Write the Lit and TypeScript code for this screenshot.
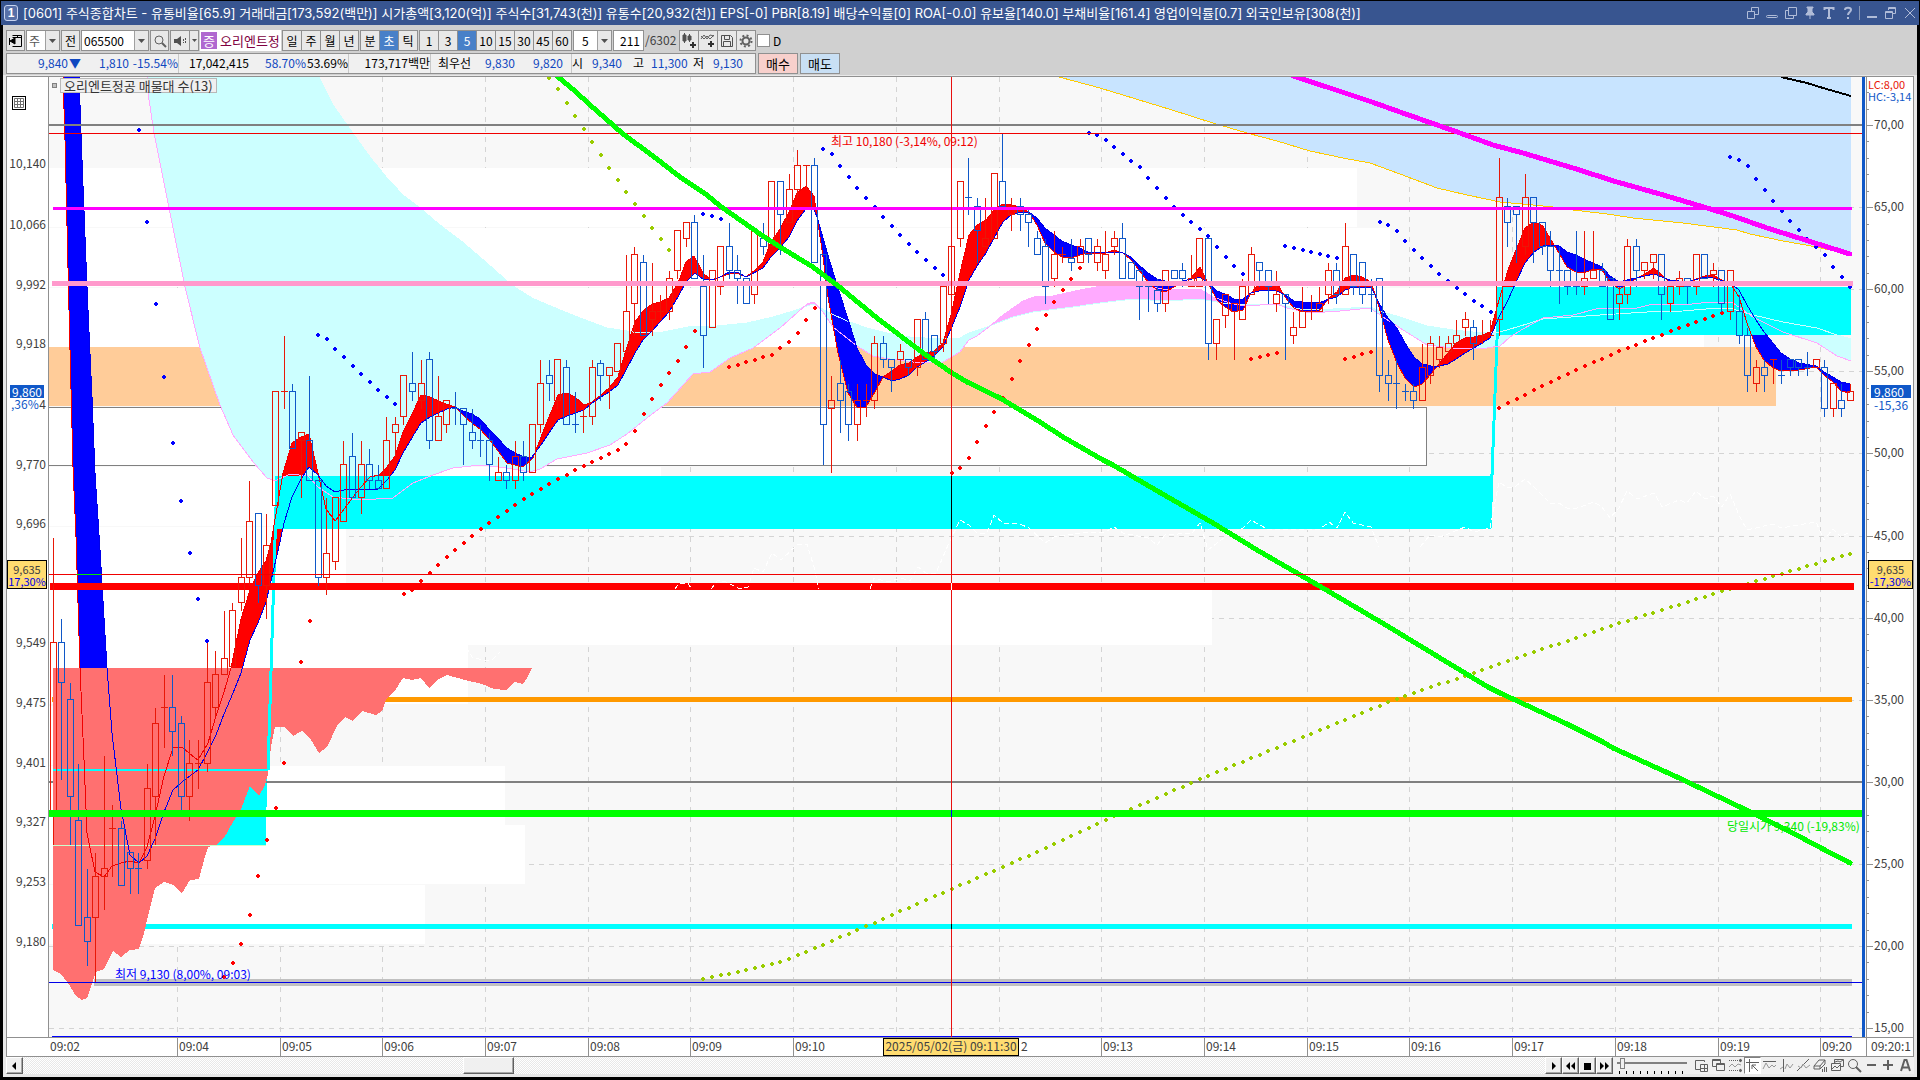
import { LitElement, html, svg, css } from "lit";
import { customElement, state } from "lit/decorators.js";

type Pt = [number, number];

/* Plot canvas: one unit is one pixel on a 1920-wide window. */
const LEFT = 49;
const TOP = 77;
const WIDTH = 1817;
const HEIGHT = 960;
const RED = "#e81808";
const BLUE = "#1058c8";

const barX = (i: number) => 53 + 8.5585 * i;
const tickY = (n: number) => 133.3 + n * 8.083;
const pctX = (x: number) => `${(((x - LEFT) / WIDTH) * 100).toFixed(3)}%`;
const pctY = (y: number) => `${(((y - TOP) / HEIGHT) * 100).toFixed(3)}%`;

/* Candles: direction, high, body top, body bottom, low; prices in 10-won ticks below 10,180. */
const CANDLES = `
r50,63,84,88 b60,63,68,80 b68,70,82,88 b78,85,98,98 b91,97,100,103 r89,92,97,105 r77,91,92,96 r83,86,86,92
b85,86,93,93 b89,89,91,94 b89,91,91,94 r78,81,90,91 r71,73,82,88 r67,71,71,76 b67,71,74,77 b72,73,82,84
r75,78,82,85 r75,78,78,81 r63,68,78,79 r64,67,71,72 r59,65,67,67 r58,59,66,66 r50,55,58,59 r43,48,55,56
b47,47,56,58 r47,51,56,60 r32,32,46,46 r25,32,32,34 b31,32,39,39 r37,37,38,45 b30,38,43,43 b43,43,55,56
r45,52,55,57 r45,45,53,54 r38,41,48,48 b37,40,45,45 r38,41,45,47 b39,41,43,44 b41,43,44,44 r35,38,44,44
r35,36,37,40 r30,30,35,36 b27,31,32,33 r28,31,33,34 b27,28,38,39 r30,35,38,38 r33,33,36,37 b32,34,34,36
b34,34,36,41 b34,37,38,39 b36,38,38,40 b37,38,41,43 r40,42,43,43 b41,42,43,44 r38,40,43,44 b38,40,42,43
r36,36,42,42 r28,31,36,37 b28,30,31,33 r28,28,33,34 b28,29,36,36 b32,36,36,37 r34,35,35,37 r28,29,35,36
b28,28.5,30,33 r29,29,30,34 r26,26,29.5,29.5 r15,22,27,27 r14,15,21,25 b15,16,25,25 r16,22,23,25 r20,22,22,23
r17,18,22,23 r12,12,17,18 r11,11,13,14 b10,11,18,18 b15,19,25,29 r17,17,24,24 r14,14,19,20 b11,14,17,18
b15,17,18,21 b18,18,21,21 r12,12,20,21 b11,13,14,15 r6,6,14,14 b6,6,10,15 r5,7,11,11 r2,4,7,8
r4,4,4,7 b3,4,16,16 b15,15,36,41 r30,33,34,42 b28,31,33,37 b31,32,36,38 r31,33,36,38 r31,33,33,35
r25,26,33,34 b25,26,28,29 b28,28,29,32 r26,27,28,29 b28,28,29,30 r23,23,29,30 b22,23,28,28 b25,25,27,28
r19,19,26,27 r14,14,20,20 r6,6,13,14 b3,8,8,10 b8,9,12,16 r8,13,14,14 r5,5,13,13 b0,6,9,9
r8,9,10,12 b8,9,10,12 b9,10,11,14 b12,13,15,15 b13,14,19,21 r12,15,18,19 r14,15,15,16 b13,15.5,16,17
r13,14,16,16 b13,13,15,16 r13,14,16,17 r12,15,17,18 r12,13,14,15 b11,13,18,18 b16,16,18,18 b17,17,19,23
b19,19,19,22 b18,19.5,21,22 r17,17,21,22 b17,17,18,18 b16,17,18,19 r15,18,19,19 r13,13,19,19 b13,13,26,28
r23,23,26,28 r20,20,22.5,24 r21,21,22,28 r18,19,23,23 r14,15,20,20 b16,16,17,19 b17,17,19,21 r17,20,21,22
b20,20,21,28 r22,24,25,26 r19,22,24,24 r20,22,22,23 r19,21,22,22 r16,17,20,21 b16,17,20,21 r11,14,20,20
b15,15,19,20 b16,16,20,21 b18,20,20,22 b18,18,30,32 b28,30,31,33 b28,31,31,34 b31,32,32,33 b31,32,33,34
r26,29,33,33 r25,26,30,31 r25,26.5,28,29 r25,26,27,28 r23,25,26,26 r22,23,24,25 b23,24,26,28 r23,25,25,26
r23,25,25,25 r3,8,23,25 b8,9,11,14 b9,9,10,16 r5,8,14,15 b8,8,11,16 b11,11,14,15 b12,14,17,19
b14,17,17,21 b17,17,19,20 b12,19,19,20 r12,18,19,20 r12,17,18,18 b16,17,19,19 b18,18,23,23 r19,20,21,23
r13,14,20,21 b13,14,17,19 r16,16,17,18 r15,15,16,18 b15,15,20,23 r19,19,21,22 r17,18,19,20 b18,18,19,21
r15,15,19,20 b15,15,18,18 r16,17,17.5,19 b17,17,21,22 r17,17,22,23 b20,22,25,26 b24,25,30,32 r28,29,31,32
b28,29,30,32 r28,28,28,31 b28,30,30,31 b28,28,29,30 b28,28,29,30 b27,29,29,30 r28,28,29,29 b28,29,34,35
r31,31,34,35 b31,33,34,35 r31,32,33,33`
  .trim()
  .split(/\s+/)
  .map((c) => ({ up: c[0] === "r", v: c.slice(1).split(",").map(Number) }));

const parse = (s: string): Pt[] =>
  s.trim().split(/\s+/).map((p) => p.split(",").map(Number) as Pt);

const FAST = parse(`63,77 65,140 69,310 73,467 76,537 80,668 84,760 87,833 95,872 104,877 112,866 121,863 130,861 139,863
147,847 155,816 164,776 173,748 182,747 190,754 198,760 208,743 216,716 224,692 231,668 241,619 250,590 258,573 266,561
271,543 272,537 283,473 292,443 301,437 309,434 318,473 326,509 335,521 345,508 353,497 361,487 370,477 379,475 387,467
395,456 403,432 413,412 421,395 430,397 443,403 455,407 463,415 473,424 480,429 490,440 507,463 523,467 533,458 541,437
549,417 558,395 567,393 575,397 584,405 592,402 601,395 609,388 618,377 626,350 635,322 643,311 652,304 660,302 669,298
678,283 686,262 694,256 703,273 711,280 720,277 729,274 737,273 746,277 754,271 763,262 771,242 780,229 789,212 797,193
806,186 814,196 818,223 823,257 828,297 838,353 848,393 857,407 866,407 875,392 883,377 892,371 900,365 909,363 917,357
927,353 934,351 943,343 951,315 960,273 969,235 977,225 986,220 994,210 1003,204 1011,205 1020,207 1029,212 1037,225
1045,243 1054,252 1062,257 1071,258 1080,255 1088,253 1105,253 1114,250 1123,253 1131,260 1139,270 1148,282 1157,290
1165,292 1174,287 1183,282 1191,278 1200,267 1208,283 1217,300 1225,307 1234,312 1243,310 1251,293 1259,284 1268,282
1277,283 1285,297 1294,308 1303,312 1319,311 1329,298 1337,292 1345,278 1353,275 1362,277 1371,282 1379,307 1388,340
1397,363 1405,378 1414,387 1422,384 1431,374 1439,364 1448,353 1456,343 1465,338 1474,337 1482,335 1490,332 1499,300
1508,270 1516,250 1525,228 1534,222 1543,226 1551,240 1559,253 1567,267 1576,272 1586,272 1594,269 1602,270 1610,282
1619,289 1627,285 1637,278 1645,274 1654,268 1662,275 1670,283 1679,286 1687,286 1696,279 1705,276 1713,275 1722,280
1730,283 1739,297 1747,323 1756,347 1764,360 1773,368 1781,371 1799,370 1816,367 1824,375 1833,382 1841,391 1850,393`);

const SLOW = parse(`63,77 79,77 82,160 87,287 92,397 95,473 100,550 107,668 112,733 121,809 130,855 139,863 147,856 155,839
164,812 173,790 182,782 198,770 207,753 216,735 224,714 233,693 241,673 250,640 258,623 266,602 274,568 280,542 284,523
292,497 301,479 309,467 318,475 326,486 335,492 348,489 378,489 387,480 395,470 403,453 413,436 421,423 430,417 438,413
447,409 455,407 463,411 472,414 480,419 490,430 507,448 515,453 524,457 532,457 541,445 549,433 558,420 567,416 584,410
592,403 601,397 609,392 618,385 626,370 635,353 643,340 652,331 669,312 678,297 686,282 695,273 703,279 712,280 720,277
729,272 737,272 746,277 763,268 771,257 780,248 789,237 797,221 806,209 814,209 818,220 827,252 837,285 849,322 857,348
866,365 875,374 883,377 892,381 900,379 909,375 917,367 927,361 934,356 943,347 951,329 960,307 969,280 977,266 986,253
994,238 1003,222 1011,215 1020,212 1029,212 1037,218 1045,228 1054,235 1062,241 1071,245 1080,248 1088,252 1105,253
1114,252 1123,253 1131,257 1139,265 1148,273 1157,279 1165,281 1183,281 1200,277 1208,283 1217,291 1225,294 1234,299
1243,299 1251,293 1259,291 1268,290 1277,291 1285,295 1294,301 1303,302 1319,303 1329,299 1337,297 1345,290 1353,287
1371,287 1379,303 1388,318 1397,328 1405,343 1414,357 1422,364 1431,366 1439,366 1448,364 1456,359 1465,353 1474,348
1490,338 1499,317 1508,300 1516,282 1525,263 1534,252 1543,246 1551,245 1559,246 1567,252 1576,255 1586,260 1602,267
1610,276 1619,282 1627,280 1645,276 1654,274 1670,280 1687,282 1705,277 1713,278 1730,283 1739,290 1747,305 1756,320
1764,332 1773,343 1781,353 1790,359 1799,363 1816,366 1824,372 1833,377 1841,382 1850,384`);

const SPAN_A = parse(`147,77 319,77 333,105 347,125 370,157 387,178 403,195 420,208 440,225 460,240 480,257 497,272 513,286
532,298 553,307 580,318 607,328 633,332 663,332 693,326 707,327 747,323 773,317 793,311 813,304 830,313 847,321 867,328
887,333 910,337 940,339 960,338 969,333 987,327 1013,317 1033,312 1073,307 1100,303 1133,299 1167,301 1200,299 1223,303
1250,305 1277,304 1300,309 1333,309 1370,307 1383,312 1400,317 1427,326 1453,330 1483,333 1500,332 1517,327 1543,319
1600,315 1647,312 1683,311 1717,308 1733,309 1753,315 1783,322 1817,328 1837,335 1851,339`);

const SPAN_B = parse(`147,77 148,93 154,133 170,213 185,287 200,348 220,405 233,435 253,462 267,478 275,481 290,474 308,476
318,487 333,497 360,500 393,498 413,483 433,475 453,468 480,465 507,468 530,472 540,469 557,459 587,453 610,445 627,434
647,418 667,403 693,374 710,372 730,358 753,348 780,328 807,304 814,302 823,312 833,327 857,346 873,356 890,359 913,362
943,362 960,352 969,340 977,336 990,326 1003,315 1023,301 1037,296 1053,296 1080,290 1107,285 1130,283 1147,286
1167,290 1200,289 1213,297 1230,303 1243,306 1277,304 1287,308 1310,313 1340,311 1370,308 1383,317 1400,328 1427,345
1453,348 1480,349 1500,346 1510,337 1523,329 1543,318 1573,315 1600,308 1633,309 1653,304 1683,305 1710,302 1733,303
1753,317 1783,332 1817,343 1837,356 1851,361`);

const LONG_SPAN =
  "1059,77 1100,88 1172,110 1213,123 1247,133 1277,141 1310,151 1343,158 1370,163 1400,174 1437,188 1467,195 1500,202 1533,205 1553,207 1573,210 1607,214 1633,218 1683,223 1737,230 1750,234 1783,241 1817,247 1851,255";
const MAGENTA_MA =
  "1293,76 1330,88 1372,102 1400,112 1460,133 1493,145 1523,153 1573,168 1617,182 1660,194 1707,208 1733,216 1767,228 1850,254";
const BLACK_MA = "1781,77 1807,83 1823,88 1851,96";
const GREEN_MA =
  "557,76 575,91 590,105 613,125 623,134 653,156 680,177 707,195 720,206 763,236 780,247 813,267 837,285 877,318 923,353 952,373 967,382 1000,398 1040,422 1063,437 1103,460 1113,465 1147,485 1213,523 1257,550 1328,591 1384,624 1488,687 1500,693 1567,724 1603,742 1613,748 1677,777 1740,807 1787,830 1823,849 1850,863";
const RED_CLOUD =
  "53,668 532,668 527,678 523,684 515,682 506,690 494,689 482,684 465,680 447,675 437,680 429,688 421,678 412,680 403,678 396,689 386,700 382,711 376,715 362,711 353,721 345,717 337,726 327,747 319,753 310,738 302,731 293,736 285,727 275,727 271,747 268,774 265,785 259,796 250,786 241,809 233,822 224,838 216,845 208,847 204,860 199,879 190,880 182,893 173,885 164,882 155,888 149,912 144,933 139,949 130,950 121,957 113,951 104,969 96,972 87,998 82,1000 76,996 70,986 61,974 53,970";

const CLOSE_LINES = [
  "438,654 446,653 456,652 465,645 472,657 482,660 492,660 500,652",
  "675,589 679,583 688,583 692,590",
  "711,589 718,580 726,582 740,589 748,587 754,568 763,572 772,553 781,560 798,544 807,544 814,567 819,589",
  "870,589 874,578 888,582 901,578 910,581 918,567 926,573 936,573 949,543 960,520 969,525 977,533 987,533 994,515 1003,523 1020,524 1029,528 1045,543 1054,537 1080,533 1105,532 1114,527 1123,533 1148,538 1157,545 1165,535 1192,533 1200,523 1208,550 1225,537 1243,528 1251,520 1267,529 1320,529 1329,522 1337,528 1345,512 1353,523 1371,527 1379,547",
  "1420,547 1430,535 1440,537 1453,532 1465,527 1474,532 1490,528 1499,482 1508,488 1516,486 1525,479 1534,487 1550,503 1559,503 1567,508 1577,508 1594,502 1602,507 1610,518 1619,508 1627,491 1637,499 1654,493 1662,507 1679,500 1687,503 1696,491 1705,499 1713,496 1722,507 1730,494 1739,515 1747,530 1773,524 1781,528 1816,522 1824,540 1833,529 1841,537 1851,531",
];

/* Dotted series: first bar index and one y per bar. */
const SAR_BLUE: [number, number[]][] = [
  [10, [130, 222, 304, 377, 443, 501, 553, 599, 641]],
  [31, [335, 339, 349, 357, 366, 374, 382, 390, 397, 404]],
  [76, [214, 216, 219]],
  [90, [149, 154, 166, 177, 188, 198, 207, 217, 226, 235, 244, 252, 260, 268, 275]],
  [121, [133, 135, 140, 147, 154, 161, 167, 178, 188, 198, 207, 215, 222, 229, 236, 247, 257, 266, 274]],
  [144, [246, 248, 250, 252, 254, 256, 258]],
  [155, [222, 225, 231, 241, 250, 258, 266, 274, 281, 288, 294, 301, 306, 312]],
  [196, [157, 160, 166, 179, 190, 201, 211, 221, 230, 239, 247, 255, 267, 277, 287]],
];
const SAR_RED: [number, number[]][] = [
  [20, [977, 963, 944, 915, 876, 840, 808, 763]],
  [29, [662, 621]],
  [41, [594, 590, 581, 573, 565, 557, 550, 543, 536, 529, 523, 517, 511, 505, 499, 494, 489, 484, 479, 475, 470, 466,
    462, 458, 454, 450, 444, 431, 414, 399, 385, 373, 361, 347, 331]],
  [79, [367, 365, 362, 360, 357, 355, 348, 342, 333, 320, 308]],
  [105, [473, 468, 458, 442, 426, 412, 398, 379, 361, 345, 329, 315, 302, 290, 279, 268]],
  [140, [359, 357, 355, 353]],
  [151, [359, 357, 354, 352]],
  [169, [408, 403, 399, 395, 390, 386, 382, 378, 374, 370, 366, 362, 359, 355, 351, 348, 345, 341, 338, 335, 331, 328,
    325, 322, 319, 316, 313]],
];
const OLIVE_TOP: [number, number[]][] = [
  [58, [78, 89, 103, 116, 129, 142, 155, 168, 180, 192, 204, 216, 228, 239, 250]],
];
const OLIVE_RISE: Pt[] = [[76, 979], [77, 977], [80, 972], [85, 962], [86, 959], [94, 930], [105, 889], [115, 852],
  [123, 820], [136, 772], [157, 699], [169, 664], [182, 626], [194, 594], [203, 571], [210, 554]];

/* Volume profile rows: top y, right end. */
const PROFILE: Pt[] = [[168, 1357], [228, 1390], [288, 1704], [467, 661], [527, 346], [586, 1212], [645, 468],
  [706, 220], [766, 505], [825, 525], [885, 425]];

const MINUTES: [string, number][] = [["09:02", 49], ["09:04", 177], ["09:05", 280], ["09:06", 382], ["09:07", 485],
  ["09:08", 588], ["09:09", 690], ["09:10", 793], ["", 896], ["", 999], ["09:13", 1101], ["09:14", 1204],
  ["09:15", 1307], ["09:16", 1409], ["09:17", 1512], ["09:18", 1615], ["09:19", 1718], ["09:20", 1820]];

const PRICES: [string, number][] = [["10,140", 164], ["10,066", 225], ["9,992", 285], ["9,918", 344], ["4", 405],
  ["9,770", 465], ["9,696", 524], ["9,549", 643], ["9,475", 703], ["9,401", 763], ["9,327", 822], ["9,253", 882],
  ["9,180", 942]];

const RATES: [string, number][] = ["70", "65", "60", "55", "50", "45", "40", "35", "30", "25", "20", "15"].map(
  (r, i) => [`${r},00`, Math.round(125 + i * 82.1)]
);

const lerp = (pts: Pt[], x: number) => {
  for (let i = 1; i < pts.length; i++) {
    if (x <= pts[i][0]) {
      const [x0, y0] = pts[i - 1];
      const [x1, y1] = pts[i];
      return y0 + ((y1 - y0) * (x - x0)) / (x1 - x0);
    }
  }
  return pts[pts.length - 1][1];
};

/* Fills the space between two lines, split by which of them is on top. */
const ribbon = (a: Pt[], b: Pt[]) => {
  let over = "";
  let under = "";
  const end = Math.min(a[a.length - 1][0], b[b.length - 1][0]);
  for (let x = a[0][0]; x < end; x++) {
    const ya = Math.round(lerp(a, x + 0.5));
    const yb = Math.round(lerp(b, x + 0.5));
    if (ya === yb) continue;
    const cell = `M${x} ${ya}V${yb}h1V${ya}z`;
    if (ya < yb) over += cell;
    else under += cell;
  }
  return { over, under };
};

const join = (pts: Pt[]) => pts.map((p) => p.join(",")).join(" ");
const dotPath = (series: [number, number[]][]) =>
  series
    .map(([i0, ys]) =>
      ys.map((y, k) => `M${Math.round(barX(i0 + k)) - 2} ${y - 1}h1v-1h2v1h1v2h-1v1h-2v-1h-1z`).join("")
    )
    .join("");

const MA_FILL = ribbon(FAST, SLOW);
const SPAN_FILL = ribbon(SPAN_A, SPAN_B);
const OLIVE = dotPath([
  ...OLIVE_TOP,
  [76, Array.from({ length: 135 }, (_, k) => Math.round(lerp(OLIVE_RISE, 76 + k)))],
]);

const candlePath = (up: boolean) =>
  CANDLES.map((c, i) => {
    if (c.up !== up) return "";
    const x = Math.round(barX(i) - 0.5) + 0.5;
    const [h, t, b, l] = c.v.map((n) => Math.floor(tickY(n)) + 0.5);
    const body = t === b ? `M${x - 3.5} ${t}h7` : `M${x - 3} ${t}h6V${b}h-6z`;
    return `${h < t ? `M${x} ${h}V${t}` : ""}${body}${l > b ? `M${x} ${b}V${l}` : ""}`;
  }).join("");
const UP_PATH = candlePath(true);
const DOWN_PATH = candlePath(false);

const hline = (y: number, x1: number, x2: number, color: string, w: number) =>
  svg`<rect x=${x1} y=${y} width=${x2 - x1} height=${w} fill=${color}></rect>`;

@customElement("chart-plot")
class ChartPlot extends LitElement {
  static styles = css`
    :host {
      display: block;
      position: relative;
      overflow: hidden;
      min-width: 0;
      min-height: 0;
      background: #f8f8f8;
    }
    svg {
      position: absolute;
      inset: 0;
      width: 100%;
      height: 100%;
      display: block;
    }
    .note {
      position: absolute;
      white-space: nowrap;
      line-height: 14px;
      font-size: 12px;
    }
    .high {
      color: #f00000;
    }
    .low {
      color: #0000ff;
    }
    .open {
      color: #00e800;
    }
    .legend {
      position: absolute;
      left: 3px;
      top: 1px;
      display: flex;
      align-items: center;
      gap: 3px;
    }
    .mark {
      width: 3px;
      height: 3px;
      border: 1px solid #808080;
      background: #c0c0c0;
    }
    .name {
      border: 1px solid #b8b8b8;
      background: #f0f0f0;
      color: #333;
      padding: 0 3px;
      font-size: 13px;
      line-height: 13px;
      white-space: nowrap;
    }
  `;

  render() {
    return html`
      <svg viewBox="49 77 1817 960" preserveAspectRatio="none" shape-rendering="crispEdges" fill="none"
        role="img" aria-label="오리엔트정공 5초 차트">
        <g stroke="#d4d4d4" stroke-dasharray="5 5">
          ${MINUTES.slice(1).map(([, x]) => svg`<path d="M${x + 0.5} 77V1037"></path>`)}
          ${RATES.map(([, y]) => svg`<path d="M49 ${y + 0.5}H1862"></path>`)}
        </g>
        ${PROFILE.map(([y, x]) => svg`<rect x="49" y=${y} width=${x - 49} height="59" fill="#fff"></rect>`)}
        <rect x="49" y="347" width="1727" height="59" fill="#ffcc99"></rect>
        <rect x="40.5" y="407.5" width="1386" height="58" fill="#fff" stroke="#808080"></rect>
        <polygon points="${LONG_SPAN} 1851,77" fill="#c8e4ff"></polygon>
        <polyline points=${LONG_SPAN} stroke="#ffcc00"></polyline>
        <path d=${SPAN_FILL.over} fill="#ccffff"></path>
        <path d=${SPAN_FILL.under} fill="#ffaaff"></path>
        <path d=${MA_FILL.over} fill="#ff0000"></path>
        <path d=${MA_FILL.under} fill="#0000ff"></path>
        <g fill="#00ffff">
          <rect x="275" y="476" width="1215" height="53"></rect>
          <rect x="1499" y="287" width="352" height="48"></rect>
          <polygon points="217,845 217,780 267,770 266,845"></polygon>
        </g>
        <path d="M1490 529L1497 340L1499 287" stroke="#00ffff" stroke-width="3"></path>
        ${hline(781, 49, 1862, "#808080", 2)} ${hline(697, 52, 1852, "#ff9900", 5)}
        ${hline(924, 52, 1852, "#00ffff", 5)} ${hline(979, 94, 1852, "#c0c0c0", 7)}
        <polygon points=${RED_CLOUD} fill="#ff7070"></polygon>
        ${hline(769, 53, 268, "#00ffff", 2)} ${hline(845, 53, 266, "#ccffcc", 1)}
        <path d="M268 770L275 540L277 476" stroke="#00ffff" stroke-width="3"></path>
        <path d=${dotPath(SAR_BLUE)} fill="#0000ff"></path>
        <path d=${dotPath(SAR_RED)} fill="#ff0000"></path>
        <path d=${OLIVE} fill="#99cc00"></path>
        <polyline points=${join(SPAN_A.slice(1))} stroke="#ccffff"></polyline>
        <polyline points=${join(SPAN_B)} stroke="#ffaaff"></polyline>
        <polyline points=${join(FAST)} stroke="#f00000"></polyline>
        <polyline points=${join(SLOW.slice(1))} stroke="#0000e8"></polyline>
        ${hline(583, 50, 1854, "#ff0000", 7)}
        ${CLOSE_LINES.map((p) => svg`<polyline points=${p} stroke="#fff" stroke-dasharray="5 3"></polyline>`)}
        <path d=${UP_PATH} stroke=${RED}></path>
        <path d=${DOWN_PATH} stroke=${BLUE}></path>
        ${hline(124, 49, 1862, "#808080", 2)} ${hline(133, 49, 1862, "#f00000", 1)}
        ${hline(207, 53, 1852, "#ff00ff", 3)} ${hline(281, 52, 1853, "#ff99cc", 5)}
        ${hline(810, 49, 1862, "#00ff00", 7)} ${hline(982, 49, 1862, "#0000e8", 1)}
        ${hline(1036, 52, 1852, "#0000ff", 1)}
        <polyline points=${BLACK_MA} stroke="#000" stroke-width="2"></polyline>
        <polyline points=${MAGENTA_MA} stroke="#ff00ff" stroke-width="5" stroke-linecap="round"></polyline>
        <polyline points=${GREEN_MA} stroke="#00ff00" stroke-width="5" stroke-linecap="round"></polyline>
        ${hline(574, 49, 1862, "#f00000", 1)} ${hline(574, 76, 101, "#00e800", 1)}
        <rect x="951" y="77" width="1" height="960" fill="#e81010"></rect>
        <rect x="951" y="476" width="1" height="53" fill="#000"></rect>
        <rect x="951" y="583" width="1" height="7" fill="#fff"></rect>
        <rect x="951" y="810" width="1" height="7" fill="#0000ff"></rect>
        <rect x="951" y="924" width="1" height="5" fill="#000"></rect>
        <rect x="1862" y="77" width="3" height="960" fill="#1058c8"></rect>
      </svg>
      <div class="legend"><span class="mark"></span><span class="name">오리엔트정공 매물대 수(13)</span></div>
      <span class="note high" style="left:${pctX(831)};top:${pctY(134)}">최고 10,180 (-3,14%, 09:12)</span>
      <span class="note low" style="left:${pctX(115)};top:${pctY(967)}">최저 9,130 (8,00%, 09:03)</span>
      <span class="note open" style="left:${pctX(1727)};top:${pctY(819)}">당일시가 9,340 (-19,83%)</span>
    `;
  }
}

const icon = (w: number, h: number, body: unknown) =>
  html`<svg width=${w} height=${h} viewBox="0 0 ${w} ${h}" fill="none" stroke="currentColor" aria-hidden="true">${body}</svg>`;

const TITLE_ICONS: [string, unknown][] = [
  ["창 분리", svg`<path d="M5.5 1.5h7v7h-4M1.5 5.5h7v7h-7zM5.5 1.5v4"></path>`],
  ["숨기기", svg`<rect x="1.5" y="9.5" width="11" height="2" rx="1"></rect>`],
  ["복제", svg`<path d="M4.5 1.5h8v8h-8zM4.5 4.5h-3v8h8v-3"></path>`],
  ["고정", svg`<path d="M4 1h6v1h-1v4l2 2v1H3V8l2-2V2H4zM7 9v4" fill="currentColor"></path>`],
  ["글꼴", svg`<path d="M2.5 4V2h9v2M7 2v10M5 12h4" stroke-width="2"></path>`],
  ["도움말", svg`<path d="M4 4c0-3 6-3 6 0 0 2-3 2-3 5M7 11v2" stroke-width="2"></path>`],
];
const FRAME_ICONS: [string, unknown][] = [
  ["최소화", svg`<path d="M2 11h10" stroke-width="2"></path>`],
  ["이전 크기", svg`<path d="M4.5 4V1.5h7v6H9M1.5 5.5h7v7h-7zM1.5 6.5h7M4.5 2.5h7"></path>`],
  ["닫기", svg`<path d="M2 2l10 10M12 2L2 12"></path>`],
];

const TOOL_ICONS: [string, unknown][] = [
  ["창 추가", svg`<path d="M10.500 4V2.500h-9v9h5M6.500 6.500h7v7h-7zM10.500 6.500v7M6.500 10.500h7"></path>`],
  ["창 겹치기", svg`<path d="M1.500 1.500h8v7h-8zM1.500 2.500h8"></path><path d="M5.500 5.500h8v7h-8zM5.500 6.500h8" fill="#f0f0f0"></path>`],
  ["구간", svg`<path d="M1 2.500h12M1 12.500h12" stroke-dasharray="1 1"></path><path d="M12 1l2 1.500-2 1.500zM12 11l2 1.500-2 1.500z" fill="currentColor"></path><path d="M1 9l3-3 3 3 3-3 3 1" stroke="#989898"></path>`],
  ["십자선", svg`<path d="M1 4.500h13M4.500 1v13M7 7l6 6M7 7h4M7 7v4"></path>`],
  ["수평선", svg`<path d="M1 3.500h13"></path><path d="M1 11l3-6 3 5 3-3 2 2 2-2" stroke="#989898"></path>`],
  ["수직선", svg`<path d="M4.500 1v13"></path><path d="M1 11l3-2M6 11l2-5 3 4 3-4" stroke="#989898"></path>`],
  ["추세선", svg`<path d="M1 13L13 1"></path><path d="M2 8l3 2 2-4 3 4 4-3" stroke="#989898"></path>`],
  ["모두 지우기", svg`<path d="M1 8l5-6h6l-5 6zM1 8v3h6V8M7 11l5-5V2M9.500 14v-3M11.500 14V9M13.500 14V9"></path>`],
  ["이미지", svg`<path d="M4.500 5V1.500h9v7H11M5 4l3-1 2 1 3-2"></path><path d="M1.500 5.500h9v7h-9zM2 11l3-3 2 2 3-3"></path>`],
  ["돋보기", svg`<circle cx="6" cy="6" r="4.500"></circle><path d="M9 9l5 5" stroke-width="2"></path>`],
  ["축소", svg`<path d="M3 7h9" stroke-width="2"></path>`],
  ["확대", svg`<path d="M2 7h10M7 2v10" stroke-width="2"></path>`],
  ["자동", svg`<path d="M3 13L6.500 2h2L12 13M4.500 9.500h6" stroke-width="2"></path>`],
];

@customElement("app-root")
export class AppRoot extends LitElement {
  @state() private unit = "초";
  @state() private size = "5";

  static styles = css`
    :host {
      display: block;
      font-family: "Noto Sans CJK KR", sans-serif;
      font-size: 12px;
      color: #000;
    }
    * {
      box-sizing: border-box;
    }
    button,
    input,
    select {
      font: inherit;
      color: inherit;
      margin: 0;
      padding: 0;
      border-radius: 0;
      appearance: none;
      outline: none;
      min-width: 0;
    }
    svg {
      display: block;
      flex: none;
    }
    .window {
      min-height: 100vh;
      background: #000;
      padding: 1px 1px 3px;
      display: flex;
      flex-direction: column;
    }
    .title {
      height: 24px;
      background: #385590;
      color: #fff;
      display: flex;
      align-items: center;
      padding-left: 3px;
      gap: 5px;
      white-space: nowrap;
    }
    .title h1 {
      flex: 1;
      margin: 0;
      font: 400 13px/22px Inter, "Noto Sans CJK KR", sans-serif;
      overflow: hidden;
    }
    .num {
      width: 14px;
      height: 16px;
      border: 1px solid #c8d4f0;
      border-radius: 3px;
      background: #5870a8;
      font: bold 12px/14px "Liberation Sans", sans-serif;
      text-align: center;
    }
    .frame-buttons {
      display: flex;
      color: #b0bcd8;
    }
    .frame-buttons button {
      width: 19px;
      height: 20px;
      border: 0;
      background: none;
      display: grid;
      place-items: center;
    }
    .rule {
      width: 1px;
      height: 14px;
      background: #8898b8;
      margin: 3px 2px 0;
    }
    .body {
      flex: 1;
      margin: 0 2px;
      background: #e8e8e8;
      display: flex;
      flex-direction: column;
      padding-bottom: 3px;
    }
    .tools {
      background: #d0d0d0;
      padding: 5px 3px 1px;
      display: flex;
      flex-direction: column;
      gap: 2px;
      height: 50px;
    }
    .row {
      display: flex;
      height: 21px;
      gap: 1px;
      white-space: nowrap;
    }
    .btn {
      height: 21px;
      width: 19px;
      border: 1px solid #909090;
      background: #e8e8e8;
      display: grid;
      place-items: center;
      line-height: 18px;
    }
    .seg {
      display: flex;
    }
    .seg .btn {
      width: 20px;
    }
    .seg .btn + .btn {
      margin-left: -1px;
    }
    .seg .on {
      background: #4880c8;
      color: #fff;
    }
    .field {
      display: flex;
      position: relative;
      border: 1px solid #909090;
      background: #fff;
    }
    .field input,
    .field select {
      border: 0;
      background: none;
      padding-left: 2px;
      height: 19px;
      width: 100%;
    }
    .drop {
      position: absolute;
      right: 0;
      top: 0;
      width: 14px;
      height: 19px;
      border-left: 1px solid #a0a0a0;
      background: #e8e8e8;
      display: grid;
      place-items: center;
      color: #505050;
      pointer-events: none;
    }
    .w-type {
      width: 34px;
      color: #555;
    }
    .w-code {
      width: 68px;
    }
    .w-step {
      width: 39px;
    }
    .w-step select {
      padding-left: 8px;
    }
    .w-count {
      width: 31px;
    }
    .w-count input {
      text-align: right;
      padding: 0 3px 0 0;
    }
    .stock {
      width: 81px;
      background: #fff;
      display: flex;
      align-items: center;
      gap: 3px;
      padding-left: 1px;
      color: #800040;
      overflow: hidden;
      font-size: 13px;
    }
    .stock b {
      width: 16px;
      background: #b068d0;
      color: #fff;
      font-weight: 400;
      text-align: center;
      line-height: 17px;
    }
    .total {
      line-height: 19px;
      width: 33px;
      color: #404040;
    }
    .seg .small {
      width: 10px;
    }
    .check {
      display: flex;
      align-items: center;
      gap: 3px;
    }
    .check input {
      width: 13px;
      height: 13px;
      border: 1px solid #909090;
      background: #fff;
    }
    .quotes {
      width: 750px;
      margin-right: 1px;
      border: 1px solid #909090;
      background: #f0f0f0;
      display: grid;
      grid-template-columns: 61px 13px 48px 50px 70px 57px 43px 82px 40px 44px 57px 20px 41px 18px 42px 20px 38px;
      line-height: 18px;
      text-align: right;
    }
    .quotes .l {
      text-align: left;
    }
    .quotes .sep {
      border-right: 1px solid #c8c8c8;
    }
    .quotes .wide {
      padding-right: 8px;
    }
    .down {
      color: #1048c0;
    }
    .order {
      width: 40px;
      margin-right: 1px;
      border: 1px solid #909090;
      line-height: 18px;
      font-size: 13px;
    }
    .buy {
      background: #f8d0cc;
    }
    .sell {
      background: #c8dff4;
    }
    .chart {
      flex: 1;
      margin: 1px 3px 0;
      border: 1px solid #909090;
      border-bottom: 0;
      background: #fff;
      display: grid;
      grid-template-columns: 42px minmax(0, 1fr) 47px;
      grid-template-rows: minmax(400px, 1fr) 20px;
      color: #404040;
    }
    .axis {
      position: relative;
      overflow: hidden;
      line-height: 14px;
    }
    .axis-left {
      border-right: 1px solid #909090;
    }
    .axis-right {
      border-left: 1px solid #909090;
    }
    .axis span {
      position: absolute;
      white-space: nowrap;
      margin-top: -8px;
    }
    .axis-left .price {
      right: 2px;
    }
    .axis-right .price {
      left: 7px;
    }
    .tick {
      height: 1px;
      width: 2px;
      background: #909090;
      position: absolute;
      left: 0;
    }
    .major {
      width: 6px;
    }
    .axis .limit {
      left: 1px;
      font-size: 11px;
      line-height: 12px;
      margin-top: -6px;
    }
    .lc {
      color: #e81808;
    }
    .hc,
    .rate {
      color: #1058c8;
    }
    .axis .tag {
      background: #1058c8;
      color: #fff;
      line-height: 13px;
      margin-top: -7px;
      padding: 0 2px;
    }
    .axis-left .tag {
      left: 3px;
      width: 34px;
    }
    .axis-right .tag {
      left: 4px;
      width: 40px;
      padding-left: 3px;
    }
    .axis-left .rate {
      left: 4px;
    }
    .axis-right .rate {
      left: 7px;
    }
    .axis .cross {
      background: #ffdc70;
      border: 1px solid #000;
      font-size: 11px;
      line-height: 12px;
      text-align: center;
      padding: 2px 0 1px;
      margin-top: -14px;
    }
    .axis-left .cross {
      left: 0;
      width: 40px;
    }
    .axis-right .cross {
      left: 1px;
      width: 45px;
    }
    .cross em {
      display: block;
      font-style: normal;
      color: #0000e8;
    }
    .grid-btn {
      position: absolute;
      left: 5px;
      top: 19px;
      width: 14px;
      height: 14px;
      border: 1px solid #000;
      background: #fff;
      display: grid;
      place-items: center;
      color: #707070;
    }
    .times {
      border-top: 1px solid #909090;
      border-bottom: 1px solid #909090;
      position: relative;
      overflow: hidden;
      line-height: 16px;
    }
    .times span {
      position: absolute;
      top: 0;
      height: 18px;
      padding-left: 1px;
      border-left: 1px solid #909090;
      white-space: nowrap;
    }
    .times .plain {
      border-left: 0;
    }
    .times .now {
      background: #ffdc70;
      border: 1px solid #000;
      line-height: 14px;
      width: 136px;
      text-align: center;
      padding: 0;
    }
    .corner {
      border-left: 1px solid #909090;
      padding-left: 4px;
      white-space: nowrap;
    }
    .edge {
      border-top: 1px solid #909090;
      border-bottom: 1px solid #909090;
      line-height: 16px;
    }
    .scroll {
      margin: 0 3px;
      height: 17px;
      display: flex;
      background: #f0f0f0;
    }
    .raised {
      width: 17px;
      height: 17px;
      border: 1px solid;
      border-color: #fff #606060 #606060 #fff;
      background: #f0f0f0;
      box-shadow: inset -1px -1px 0 #a8a8a8;
      display: grid;
      place-items: center;
    }
    .track {
      flex: 1;
      background: repeating-conic-gradient(#e8e8e8 0 25%, #fff 0 50%) 0 0 / 2px 2px;
    }
    .thumb {
      height: 17px;
    }
    .speed {
      width: 80px;
      padding: 0 6px 0 4px;
      display: flex;
      flex-direction: column;
      gap: 2px;
    }
    .speed input {
      width: 70px;
      height: 12px;
      background: linear-gradient(#808080, #808080) 0 5px / 100% 2px no-repeat;
    }
    .speed input::-webkit-slider-thumb {
      appearance: none;
      width: 5px;
      height: 11px;
      border: 1px solid #808080;
      background: #f0f0f0;
    }
    .marks {
      width: 68px;
      height: 3px;
      margin-left: 2px;
      background: repeating-linear-gradient(90deg, #000 0 1px, transparent 1px 7px);
    }
    .tray {
      display: flex;
      color: #606060;
    }
    .tray button {
      width: 17px;
      height: 17px;
      border: 0;
      background: none;
      display: grid;
      place-items: center;
    }
    .tray .pressed {
      background: #fff;
      border: 1px solid;
      border-color: #808080 #fff #fff #808080;
    }
  `;

  private arrow() {
    return html`<span class="drop">${icon(7, 4, svg`<path d="M0 0h7L3.500 4z" fill="currentColor" stroke="none"></path>`)}</span>`;
  }

  private group(items: string[], current: string, pick: (v: string) => void) {
    return html`<div class="seg">
      ${items.map(
        (t) => html`<button class="btn ${t === current ? "on" : ""}" @click=${() => pick(t)}>${t}</button>`
      )}
    </div>`;
  }

  private toolbar() {
    const setUnit = (v: string) => (this.unit = v);
    return html`<div class="row">
      <button class="btn" aria-label="메뉴">
        ${icon(14, 14, svg`<path d="M3.500 1.500h9v11h-9M3.500 3.500h9M8.500 1.500v2M.5 4v7"></path><path d="M1 7l5-3v6z" fill="currentColor"></path>`)}
      </button>
      <label class="field w-type"><select aria-label="종목 구분"><option>주</option></select>${this.arrow()}</label>
      <button class="btn">전</button>
      <label class="field w-code"><input aria-label="종목코드" .value=${"065500"} />${this.arrow()}</label>
      <button class="btn" aria-label="검색">
        ${icon(14, 14, svg`<circle cx="6" cy="6" r="4" stroke="#606060"></circle><path d="M9 9l4 4" stroke="#606060" stroke-width="2"></path>`)}
      </button>
      <div class="seg">
        <button class="btn" aria-label="소리">
          ${icon(14, 12, svg`<path d="M1 4h3l4-3v10l-4-3H1z" fill="#505050" stroke="none"></path><path d="M10.500 4v4M12.500 3v6" stroke="#505050" stroke-dasharray="2 1"></path>`)}
        </button>
        <button class="btn small" aria-label="소리 설정">
          ${icon(5, 3, svg`<path d="M0 0h5L2.500 3z" fill="#505050" stroke="none"></path>`)}
        </button>
      </div>
      <div class="stock"><b>증</b>오리엔트정</div>
      ${this.group(["일", "주", "월", "년"], this.unit, setUnit)} ${this.group(["분", "초", "틱"], this.unit, setUnit)}
      ${this.group(["1", "3", "5", "10", "15", "30", "45", "60"], this.size, (v) => (this.size = v))}
      <label class="field w-step"><select aria-label="주기"><option>5</option></select>${this.arrow()}</label>
      <label class="field w-count"><input aria-label="봉 개수" .value=${"211"} /></label>
      <span class="total">/6302</span>
      <div class="seg">
        <button class="btn" aria-label="종목 추가">
          ${icon(16, 16, svg`<path d="M3.500 0v10M8.500 1v8M2 2h3v6H2zM7 3h3v4H7z" fill="#505050" stroke="#505050"></path><path d="M12 9v6M9 12h6" stroke="#303030" stroke-width="2"></path>`)}
        </button>
        <button class="btn" aria-label="지표 추가">
          ${icon(16, 16, svg`<path d="M1 6l3-4 3 4 3-4 4 1M1 3l3 3 3-3 3 3 4-4" stroke="#606060"></path><path d="M11 8v6M8 11h6" stroke="#303030" stroke-width="2"></path>`)}
        </button>
        <button class="btn" aria-label="저장">
          ${icon(14, 14, svg`<path d="M1.500 1.500h9l2 2v9h-11zM4.500 1.500v4h5v-4M3.500 12.500v-5h7v5" stroke="#505050"></path>`)}
        </button>
        <button class="btn" aria-label="설정">
          ${icon(14, 14, svg`<circle cx="7" cy="7" r="3.500" stroke="#606060" stroke-width="2"></circle><circle cx="7" cy="7" r="5.500" stroke="#606060" stroke-width="2" stroke-dasharray="2 2.300"></circle>`)}
        </button>
      </div>
      <label class="check"><input type="checkbox" />D</label>
    </div>`;
  }

  private quotes() {
    return html`<div class="row">
      <div class="quotes">
        <span class="down">9,840</span><span class="down">▼</span><span class="down">1,810</span>
        <span class="down sep">-15.54%</span><span>17,042,415</span><span class="down">58.70%</span>
        <span class="sep">53.69%</span><span class="sep">173,717백만</span><span>최우선</span>
        <span class="down">9,830</span><span class="down sep wide">9,820</span><span class="l">시</span>
        <span class="down l">9,340</span><span class="l">고</span><span class="down l">11,300</span>
        <span class="l">저</span><span class="down l">9,130</span>
      </div>
      <button class="order buy">매수</button>
      <button class="order sell">매도</button>
    </div>`;
  }

  private rateTicks() {
    return Array.from({ length: 58 }, (_, k) => k - 2).map(
      (k) => html`<i class="tick ${k % 5 === 0 ? "major" : ""}" style="top:${pctY(Math.round(125 + k * 16.42))}"></i>`
    );
  }

  private chart() {
    return html`<div class="chart">
      <div class="axis axis-left">
        <button class="grid-btn" aria-label="표 보기">
          ${icon(10, 10, svg`<path d="M.5 .5h9v9h-9zM.5 3.500h9M.5 6.500h9M3.500 .5v9M6.500 .5v9"></path>`)}
        </button>
        ${PRICES.map(([t, y]) => html`<span class="price" style="top:${pctY(y)}">${t}</span>`)}
        <span class="rate" style="top:${pctY(405)}">,36%</span>
        <span class="tag" style="top:${pctY(392)}">9,860</span>
        <span class="cross" style="top:${pctY(574)}">9,635<em>17,30%</em></span>
      </div>
      <chart-plot></chart-plot>
      <div class="axis axis-right">
        ${this.rateTicks()} ${RATES.map(([t, y]) => html`<span class="price" style="top:${pctY(y)}">${t}</span>`)}
        <span class="limit lc" style="top:${pctY(84)}">LC:8,00</span>
        <span class="limit hc" style="top:${pctY(96)}">HC:-3,14</span>
        <span class="rate" style="top:${pctY(406)}">-15,36</span>
        <span class="tag" style="top:${pctY(392)}">9,860</span>
        <span class="cross" style="top:${pctY(574)}">9,635<em>-17,30%</em></span>
      </div>
      <div class="edge"></div>
      <div class="times">
        ${MINUTES.map(
          ([t, x], i) => html`<span class=${i ? "" : "plain"} style="left:${pctX(x)}">${t}</span>`
        )}
        <span class="plain" style="left:${pctX(1020)}">2</span>
        <span class="now" style="left:${pctX(883)}">2025/05/02(금) 09:11:30</span>
      </div>
      <div class="edge corner">09:20:1</div>
    </div>`;
  }

  private footer() {
    const solid = (d: string) => icon(11, 10, svg`<path d=${d} fill="#000" stroke="none"></path>`);
    return html`<div class="scroll">
      <button class="raised" aria-label="왼쪽으로">${solid("M7 1v8L3 5z")}</button>
      <div class="track"><div class="raised thumb" style="margin-left:28.9%;width:3.35%"></div></div>
      <button class="raised" aria-label="재생">${solid("M4 1v8l4-4z")}</button>
      <button class="raised" aria-label="뒤로">${solid("M5 1v8L1 5zM10 1v8L6 5z")}</button>
      <button class="raised" aria-label="정지">${solid("M2 2h7v7H2z")}</button>
      <button class="raised" aria-label="앞으로">${solid("M1 1v8l4-4zM6 1v8l4-4z")}</button>
      <div class="speed">
        <input type="range" aria-label="재생 속도" min="0" max="20" .value=${"1"} />
        <div class="marks"></div>
      </div>
      <div class="tray">
        ${TOOL_ICONS.map(
          ([label, body], i) =>
            html`<button class=${i === 3 ? "pressed" : ""} aria-label=${label}>${icon(15, 15, body)}</button>`
        )}
      </div>
    </div>`;
  }

  render() {
    const frameButton = ([label, body]: [string, unknown]) =>
      html`<button aria-label=${label}>${icon(14, 14, body)}</button>`;
    return html`<div class="window">
      <header class="title">
        <span class="num">1</span>
        <h1>
          [0601] 주식종합차트 - 유통비율[65.9] 거래대금[173,592(백만)] 시가총액[3,120(억)] 주식수[31,743(천)]
          유통수[20,932(천)] EPS[-0] PBR[8.19] 배당수익률[0] ROA[-0.0] 유보율[140.0] 부채비율[161.4] 영업이익률[0.7]
          외국인보유[308(천)]
        </h1>
        <div class="frame-buttons">
          ${TITLE_ICONS.map(frameButton)}<span class="rule"></span>${FRAME_ICONS.map(frameButton)}
        </div>
      </header>
      <main class="body">
        <div class="tools">${this.toolbar()} ${this.quotes()}</div>
        ${this.chart()} ${this.footer()}
      </main>
    </div>`;
  }
}
